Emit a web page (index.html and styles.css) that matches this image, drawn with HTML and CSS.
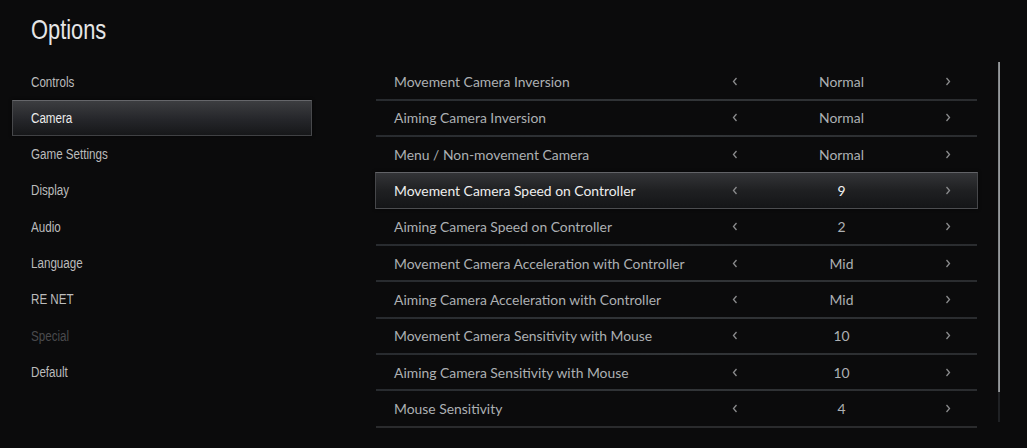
FILE: index.html
```html
<!DOCTYPE html>
<html>
<head>
<meta charset="utf-8">
<link rel="stylesheet" href="styles.css">
</head>
<body>
<div class="screen">
  <header class="header"><span class="cond title">Options</span></header>
  <div class="main">
    <nav class="menu">
      <div class="menu-item"><span class="cond">Controls</span></div>
      <div class="menu-item selected"><span class="cond">Camera</span></div>
      <div class="menu-item"><span class="cond">Game Settings</span></div>
      <div class="menu-item"><span class="cond">Display</span></div>
      <div class="menu-item"><span class="cond">Audio</span></div>
      <div class="menu-item"><span class="cond">Language</span></div>
      <div class="menu-item"><span class="cond">RE NET</span></div>
      <div class="menu-item disabled"><span class="cond">Special</span></div>
      <div class="menu-item"><span class="cond">Default</span></div>
    </nav>
    <section class="list">
      <div class="row first"><span class="label">Movement Camera Inversion</span><div class="ctrl"><span class="arr"><svg width="6" height="9" viewBox="0 0 6 9"><polyline points="4.5,1 1.5,4.5 4.5,8"/></svg></span><span class="val">Normal</span><span class="arr"><svg width="6" height="9" viewBox="0 0 6 9"><polyline points="1.5,1 4.5,4.5 1.5,8"/></svg></span></div></div>
      <div class="row"><span class="label">Aiming Camera Inversion</span><div class="ctrl"><span class="arr"><svg width="6" height="9" viewBox="0 0 6 9"><polyline points="4.5,1 1.5,4.5 4.5,8"/></svg></span><span class="val">Normal</span><span class="arr"><svg width="6" height="9" viewBox="0 0 6 9"><polyline points="1.5,1 4.5,4.5 1.5,8"/></svg></span></div></div>
      <div class="row"><span class="label">Menu / Non-movement Camera</span><div class="ctrl"><span class="arr"><svg width="6" height="9" viewBox="0 0 6 9"><polyline points="4.5,1 1.5,4.5 4.5,8"/></svg></span><span class="val">Normal</span><span class="arr"><svg width="6" height="9" viewBox="0 0 6 9"><polyline points="1.5,1 4.5,4.5 1.5,8"/></svg></span></div></div>
      <div class="row selected"><span class="label">Movement Camera Speed on Controller</span><div class="ctrl"><span class="arr"><svg width="6" height="9" viewBox="0 0 6 9"><polyline points="4.5,1 1.5,4.5 4.5,8"/></svg></span><span class="val">9</span><span class="arr"><svg width="6" height="9" viewBox="0 0 6 9"><polyline points="1.5,1 4.5,4.5 1.5,8"/></svg></span></div></div>
      <div class="row after-sel"><span class="label">Aiming Camera Speed on Controller</span><div class="ctrl"><span class="arr"><svg width="6" height="9" viewBox="0 0 6 9"><polyline points="4.5,1 1.5,4.5 4.5,8"/></svg></span><span class="val">2</span><span class="arr"><svg width="6" height="9" viewBox="0 0 6 9"><polyline points="1.5,1 4.5,4.5 1.5,8"/></svg></span></div></div>
      <div class="row"><span class="label">Movement Camera Acceleration with Controller</span><div class="ctrl"><span class="arr"><svg width="6" height="9" viewBox="0 0 6 9"><polyline points="4.5,1 1.5,4.5 4.5,8"/></svg></span><span class="val">Mid</span><span class="arr"><svg width="6" height="9" viewBox="0 0 6 9"><polyline points="1.5,1 4.5,4.5 1.5,8"/></svg></span></div></div>
      <div class="row"><span class="label">Aiming Camera Acceleration with Controller</span><div class="ctrl"><span class="arr"><svg width="6" height="9" viewBox="0 0 6 9"><polyline points="4.5,1 1.5,4.5 4.5,8"/></svg></span><span class="val">Mid</span><span class="arr"><svg width="6" height="9" viewBox="0 0 6 9"><polyline points="1.5,1 4.5,4.5 1.5,8"/></svg></span></div></div>
      <div class="row"><span class="label">Movement Camera Sensitivity with Mouse</span><div class="ctrl"><span class="arr"><svg width="6" height="9" viewBox="0 0 6 9"><polyline points="4.5,1 1.5,4.5 4.5,8"/></svg></span><span class="val">10</span><span class="arr"><svg width="6" height="9" viewBox="0 0 6 9"><polyline points="1.5,1 4.5,4.5 1.5,8"/></svg></span></div></div>
      <div class="row"><span class="label">Aiming Camera Sensitivity with Mouse</span><div class="ctrl"><span class="arr"><svg width="6" height="9" viewBox="0 0 6 9"><polyline points="4.5,1 1.5,4.5 4.5,8"/></svg></span><span class="val">10</span><span class="arr"><svg width="6" height="9" viewBox="0 0 6 9"><polyline points="1.5,1 4.5,4.5 1.5,8"/></svg></span></div></div>
      <div class="row last"><span class="label">Mouse Sensitivity</span><div class="ctrl"><span class="arr"><svg width="6" height="9" viewBox="0 0 6 9"><polyline points="4.5,1 1.5,4.5 4.5,8"/></svg></span><span class="val">4</span><span class="arr"><svg width="6" height="9" viewBox="0 0 6 9"><polyline points="1.5,1 4.5,4.5 1.5,8"/></svg></span></div></div>
    </section>
    <div class="scrollbar"><div class="thumb"></div></div>
  </div>
</div>
</body>
</html>
```
FILE: styles.css
```css
html, body {
  margin: 0;
  padding: 0;
  background: #0b0b0c;
}
.screen {
  width: 1027px;
  height: 448px;
  overflow: hidden;
  background: #0b0b0c;
}
.cond {
  display: inline-block;
  font-family: "Liberation Sans", Arial, sans-serif;
  transform: scaleX(0.83);
  transform-origin: left center;
  white-space: nowrap;
}
.header {
  padding: 14px 0 0 31px;
  height: 32px;
  line-height: 32px;
}
.title {
  font-size: 28px;
  color: #e6e6e6;
  transform: scaleX(0.78);
}
.main {
  display: flex;
  margin-top: 17.5px;
  padding-left: 12px;
}
.menu {
  width: 300px;
  display: flex;
  flex-direction: column;
}
.menu-item {
  height: 36.33px;
  line-height: 36.33px;
  padding-left: 19px;
  box-sizing: border-box;
  font-size: 14px;
  color: #bcbcbc;
}
.menu-item.disabled { color: #4a4a4c; }
.menu-item.selected {
  color: #ececec;
  border: 1px solid #47484b;
  border-top-color: #65666a;
  border-bottom-color: #404144;
  background: linear-gradient(#3c3d40, #25262a 55%, #161719);
  line-height: 34.33px;
  padding-left: 18px;
  box-shadow: 0 0 3px rgba(0,0,0,0.6);
}
.list {
  margin-left: 63px;
  width: 603px;
  display: flex;
  flex-direction: column;
}
.row {
  position: relative;
  height: 36.33px;
  display: flex;
  align-items: center;
  padding-left: 19px;
  padding-right: 20px;
  box-sizing: border-box;
  font-family: Lato, "Open Sans", sans-serif;
  font-size: 13.9px;
  color: #adb0b3;
}
.row::before {
  content: "";
  position: absolute;
  left: 1px;
  right: 1px;
  top: -1px;
  height: 2px;
  background: linear-gradient(90deg, #282b2f, #323538 50%, #2a2c2f);
}
.row.first::before, .row.selected::before, .row.after-sel::before { display: none; }
.row.last::after {
  content: "";
  position: absolute;
  left: 1px;
  right: 1px;
  bottom: -1px;
  height: 2px;
  background: #2a2b2d;
}
.row.selected {
  color: #eeeeee;
  border: 1px solid #46474a;
  border-top-color: #626367;
  border-bottom-color: #4c4d50;
  background: linear-gradient(#333437, #1f2022 50%, #141517);
  padding-left: 18px;
  padding-right: 19px;
  box-shadow: 0 0 3px rgba(0,0,0,0.6);
}
.label {
  flex: 1;
  white-space: nowrap;
}
.ctrl {
  display: flex;
  align-items: center;
  width: 233px;
}
.arr {
  width: 20px;
  display: flex;
  justify-content: center;
  align-items: center;
}
.arr svg polyline {
  fill: none;
  stroke: #8a8b8d;
  stroke-width: 1.3;
}
.val {
  flex: 1;
  text-align: center;
}
.row.selected .val { color: #f2f2f2; }
.scrollbar {
  margin-left: 20px;
  margin-top: -1.5px;
  width: 2px;
  height: 360px;
  background: #1f2124;
}
.thumb {
  height: 330px;
  background: linear-gradient(90deg, #7a7d80, #a0a3a6);
}
```
